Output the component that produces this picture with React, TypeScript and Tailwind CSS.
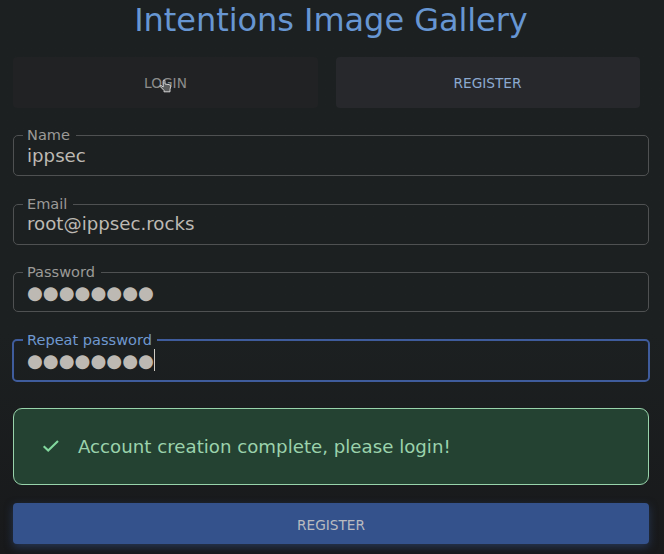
import type { ReactNode } from 'react';

type FieldProps = { label: string; labelWidth: string; box: string; children: ReactNode };

function Field({ label, labelWidth, box, children }: FieldProps) {
  return (
    <fieldset className={`rounded-[5px] border border-[#4f5152] pl-[9px] ${box}`}>
      <legend className={`h-[17px] pl-1 text-[14.56px] leading-[16px] whitespace-nowrap text-[#9b9a97] ${labelWidth}`}>
        {label}
      </legend>
      <div className="flex h-[23px] items-center pl-1 text-[18.2px] leading-[23px] text-[#bdb9b3]">{children}</div>
    </fieldset>
  );
}

function Dots() {
  return <span className="text-[18.2px] leading-[24px]">●●●●●●●●</span>;
}

function HandCursor() {
  return (
    <svg className="absolute top-[4px] left-[15px]" width="13" height="14" viewBox="0 0 13 14">
      <path
        d="M4.2 8V2.2Q4.2 1 5.1 1Q6 1 6 2.2V5L10 5.6Q11.7 6 11.6 7.5L11 10.5V12.8H5V11.4L1.2 7.5Q.8 6.4 2 6.4Z"
        fill="#5a5b5c"
        stroke="#d4d4d4"
        strokeWidth="1"
        strokeLinejoin="round"
      />
    </svg>
  );
}

export default function App() {
  return (
    <main className="h-[554px] w-[664px] overflow-hidden bg-linear-to-b from-[#1c2021] from-60% to-[#18191b] pr-[15px] pl-[13px] font-['DejaVu_Sans',sans-serif]">
      <h1 className="h-[57px] pt-[1px] text-center text-[32px] leading-[38px] tracking-[-0.05px] whitespace-nowrap text-[#6796d2]">
        Intentions Image Gallery
      </h1>
      <nav className="flex gap-[18px] text-[13.7px]">
        <button className="h-[51px] w-[305px] rounded-[4px] bg-[#212224] pt-[2px] text-[#8d8d8c]">
          <span className="relative">
            LOGIN
            <HandCursor />
          </span>
        </button>
        <button className="h-[51px] w-[304px] rounded-[4px] bg-[#27282c] pt-[2px] pr-[7px] pl-[6px] text-[#8caad0]">REGISTER</button>
      </nav>

      <Field label="Name" labelWidth="w-[53px]" box="mt-[19px] h-[49px]">ippsec</Field>
      <Field label="Email" labelWidth="w-[50px]" box="mt-[20px] h-[49px]">
        <span className="-mt-[2px]">root@ippsec.rocks</span>
      </Field>
      <Field label="Password" labelWidth="w-[78px]" box="mt-[19px] h-[48px]">
        <Dots />
      </Field>

      <fieldset className="mx-[-1px] mt-[19px] h-[51px] rounded-[5px] border-2 border-[#3f5c9c] pl-[9px]">
        <legend className="h-[18px] w-[134px] pl-1 text-[14.56px] leading-[18px] whitespace-nowrap text-[#6f98cf]">
          Repeat password
        </legend>
        <div className="flex h-[24px] items-center pl-1 text-[#bdb9b3]">
          <Dots />
          <span className="-mt-[3px] h-[22px] w-[1.5px] bg-[#d0ccc5]" />
        </div>
      </fieldset>

      <div className="mt-[26px] flex h-[77px] items-center rounded-[9px] border border-[#98d3ab] bg-[#244232] pl-[28px] text-[18.22px] text-[#9bd2ac]">
        <svg className="mr-[18px]" width="18" height="14" viewBox="0 0 18 14">
          <path d="M1.7 6.2L6.2 10.5L16 1" fill="none" stroke="#82d89e" strokeWidth="2.1" />
        </svg>
        <span className="whitespace-nowrap">Account creation complete, please login!</span>
      </div>

      <button className="mt-[18px] block h-[41px] w-full rounded-[4px] bg-[#34528c] pt-[3px] text-[13.7px] text-[#b9bbc0] shadow-[0_3px_9px_rgba(52,82,140,0.5)]">
        REGISTER
      </button>
    </main>
  );
}
